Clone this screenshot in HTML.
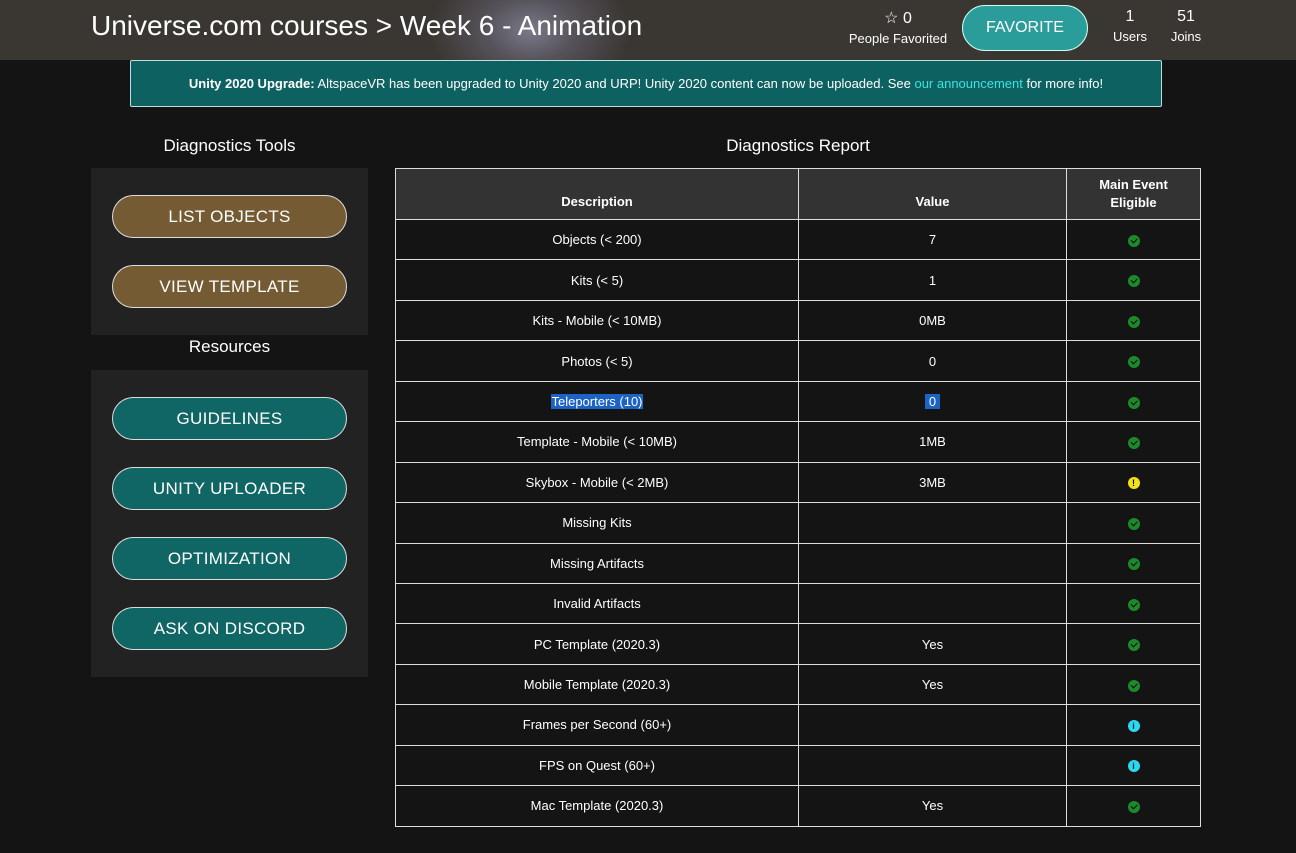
<!DOCTYPE html>
<html><head><style>
*{box-sizing:border-box;margin:0;padding:0}
body{width:1296px;height:853px;background:#141414;font-family:"Liberation Sans",sans-serif;color:#fff;position:relative;overflow:hidden}
.hdr{position:absolute;left:0;top:0;width:1296px;height:60px;background:radial-gradient(ellipse 100px 70px at 530px 30px,#7a7a88 0%,#55525a 45%,rgba(58,54,50,0) 100%),#3a3632}
.title{position:absolute;left:91px;top:10px;font-size:28px;color:#fff}
.fav{position:absolute;left:962px;top:5px;width:126px;height:46px;border-radius:23px;background:#2a9d9b;border:1px solid #cfe;font-size:16px;text-align:center;line-height:44px}
.stat{position:absolute;text-align:center;font-size:13px}
.stat b{display:block;font-weight:normal;font-size:16px;margin-bottom:3px}
.banner{position:absolute;left:130px;top:60px;width:1032px;height:47px;background:#0e6161;border:1px solid #bfdede;border-radius:2px;font-size:13px;text-align:center;line-height:45px}
.banner a{color:#3fe0e0}
h3{position:absolute;font-weight:normal;font-size:17px;text-align:center}
.panel{position:absolute;left:91px;width:277px;background:#222}
.btn{position:absolute;left:21px;width:235px;height:43px;border-radius:22px;border:1px solid #ddd;font-size:17px;text-align:center;line-height:41px;letter-spacing:.3px}
.br{background:#745b33}.tl{background:#106565}
table{position:absolute;left:395px;top:168px;width:806px;border-collapse:collapse;font-size:13px}
td,th{border:1px solid #ddd;text-align:center;height:40.45px}
th{background:#333;height:51px;font-size:13px;padding-top:14px}
th.m{padding-top:0;line-height:18px}
.d{display:inline-block;width:12px;height:12px;border-radius:50%;vertical-align:middle;position:relative}
.g{background:#1c8a2a}
.g:after{content:"";position:absolute;left:3px;top:3px;width:5px;height:2.5px;border-left:1.5px solid #0a0a0a;border-bottom:1.5px solid #0a0a0a;transform:rotate(-45deg)}
.y{background:#f2e21a;color:#111;font-size:9px;font-weight:bold;line-height:12px}
.i{background:#2bd8f0;color:#0b3040;font-size:9px;font-weight:bold;line-height:12px}
.sel{background:#1c63c6}
</style></head><body>
<div class="hdr">
<div class="title">Universe.com courses &gt; Week 6 - Animation</div>
<div class="stat" style="left:846px;top:8px;width:104px"><b>☆ 0</b>People Favorited</div>
<div class="fav">FAVORITE</div>
<div class="stat" style="left:1108px;top:8px;width:44px"><b>1</b>Users</div>
<div class="stat" style="left:1164px;top:8px;width:44px"><b>51</b>Joins</div>
</div>
<div class="banner"><b>Unity 2020 Upgrade:</b> AltspaceVR has been upgraded to Unity 2020 and URP! Unity 2020 content can now be uploaded. See <a>our announcement</a> for more info!</div>
<h3 style="left:91px;top:136px;width:277px">Diagnostics Tools</h3>
<h3 style="left:395px;top:136px;width:806px">Diagnostics Report</h3>
<div class="panel" style="top:168px;height:167px">
<div class="btn br" style="top:27px">LIST OBJECTS</div>
<div class="btn br" style="top:97px">VIEW TEMPLATE</div>
</div>
<h3 style="left:91px;top:337px;width:277px">Resources</h3>
<div class="panel" style="top:370px;height:307px">
<div class="btn tl" style="top:27px">GUIDELINES</div>
<div class="btn tl" style="top:97px">UNITY UPLOADER</div>
<div class="btn tl" style="top:167px">OPTIMIZATION</div>
<div class="btn tl" style="top:237px">ASK ON DISCORD</div>
</div>
<table>
<tr><th style="width:403px">Description</th><th style="width:268px">Value</th><th class="m">Main Event<br>Eligible</th></tr>
<tr><td>Objects (&lt; 200)</td><td>7</td><td><span class="d g"></span></td></tr>
<tr><td>Kits (&lt; 5)</td><td>1</td><td><span class="d g"></span></td></tr>
<tr><td>Kits - Mobile (&lt; 10MB)</td><td>0MB</td><td><span class="d g"></span></td></tr>
<tr><td>Photos (&lt; 5)</td><td>0</td><td><span class="d g"></span></td></tr>
<tr><td><span class="sel">Teleporters (10)</span></td><td><span class="sel">&nbsp;0&nbsp;</span></td><td><span class="d g"></span></td></tr>
<tr><td>Template - Mobile (&lt; 10MB)</td><td>1MB</td><td><span class="d g"></span></td></tr>
<tr><td>Skybox - Mobile (&lt; 2MB)</td><td>3MB</td><td><span class="d y">!</span></td></tr>
<tr><td>Missing Kits</td><td></td><td><span class="d g"></span></td></tr>
<tr><td>Missing Artifacts</td><td></td><td><span class="d g"></span></td></tr>
<tr><td>Invalid Artifacts</td><td></td><td><span class="d g"></span></td></tr>
<tr><td>PC Template (2020.3)</td><td>Yes</td><td><span class="d g"></span></td></tr>
<tr><td>Mobile Template (2020.3)</td><td>Yes</td><td><span class="d g"></span></td></tr>
<tr><td>Frames per Second (60+)</td><td></td><td><span class="d i">i</span></td></tr>
<tr><td>FPS on Quest (60+)</td><td></td><td><span class="d i">i</span></td></tr>
<tr><td>Mac Template (2020.3)</td><td>Yes</td><td><span class="d g"></span></td></tr>
</table>
</body></html>
